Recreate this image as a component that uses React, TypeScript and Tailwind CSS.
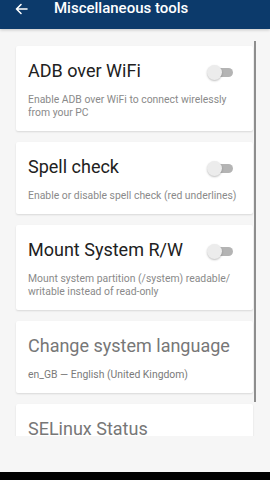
import React from 'react';

interface ToolCardProps {
    title: string;
    desc: string;
    toggle?: boolean;
    muted?: boolean;
}

const Toggle: React.FC = () => (
    <div className="relative w-[26px] h-[16px] shrink-0 mt-[1px]">
        <div className="absolute left-[5px] right-0 top-[4px] h-[9px] rounded-full bg-[#b4b4b4]" />
        <div className="absolute left-0 top-[1px] w-[15px] h-[15px] rounded-full bg-[#ececec] shadow-[0_1px_2px_rgba(0,0,0,0.25)]" />
    </div>
);

const ToolCard: React.FC<ToolCardProps> = ({ title, desc, toggle = false, muted = false }) => {
    return (
        <div className="bg-white rounded-[2px] shadow-[0_1px_2px_rgba(0,0,0,0.12)] px-3 pt-[14px] pb-[12px]">
            <div className="flex items-center justify-between pr-[8px]">
                <div className={`text-[18px] leading-[22px] ${muted ? 'text-[#777777]' : 'text-[#212121]'}`}>
                    {title}
                </div>
                {toggle && <Toggle />}
            </div>
            <div className={`mt-[11px] text-[10.4px] leading-[13px] ${muted ? 'text-[#7a7a7a]' : 'text-[#8a8a8a]'}`}>
                {desc}
            </div>
        </div>
    );
};

export default function App() {
    return (
        <div className="w-[270px] h-[480px] flex flex-col bg-[#f6f6f6] overflow-hidden" style={{ fontFamily: 'Roboto, "Noto Sans", sans-serif' }}>
            <div className="h-[29px] shrink-0 bg-[#0c3a6b] flex items-start px-[15px] shadow-[0_1px_3px_rgba(0,0,0,0.2)] z-10">
                <svg width="13" height="12" viewBox="0 0 13 12" className="mt-[3px]" fill="none" stroke="white" strokeWidth="1.6" strokeLinecap="round" strokeLinejoin="round">
                    <path d="M12 6H1.5M6 1.5L1.5 6L6 10.5" />
                </svg>
                <div className="ml-[26px] text-white text-[15px] leading-[16px] font-medium">Miscellaneous tools</div>
            </div>
            <div className="relative h-[407px] shrink-0 overflow-hidden">
                <div className="flex flex-col gap-[11px] pl-4 pr-[17px] pt-[17px]">
                    <ToolCard title="ADB over WiFi" desc="Enable ADB over WiFi to connect wirelessly from your PC" toggle />
                    <ToolCard title="Spell check" desc="Enable or disable spell check (red underlines)" toggle />
                    <ToolCard title="Mount System R/W" desc="Mount system partition (/system) readable/ writable instead of read-only" toggle />
                    <ToolCard title="Change system language" desc="en_GB — English (United Kingdom)" muted />
                    <ToolCard title="SELinux Status" desc="Enforcing" muted />
                </div>
                <div className="absolute left-[254px] top-[12px] w-[2px] h-[361px] bg-[#8e8e8e]" />
            </div>
            <div className="flex-1 bg-[#f6f6f6]" />
            <div className="h-[8px] shrink-0 bg-black" />
        </div>
    );
}
